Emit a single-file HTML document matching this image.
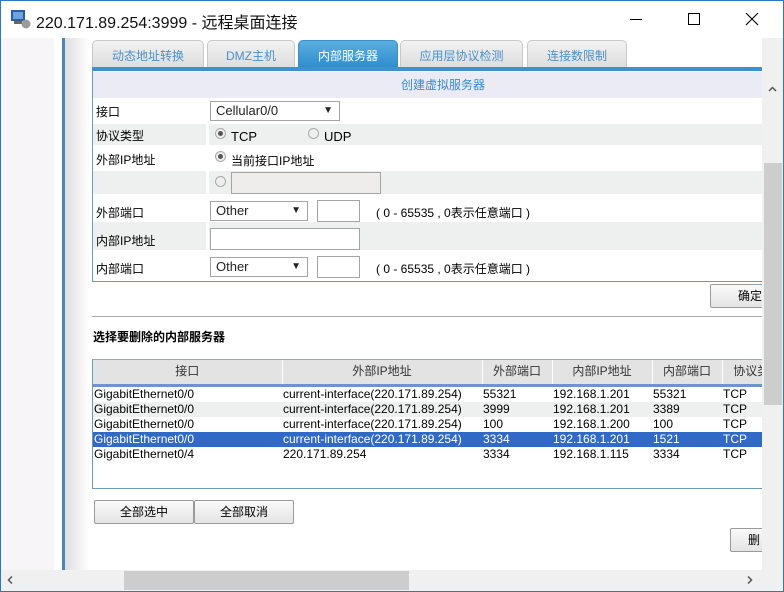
<!DOCTYPE html>
<html><head><meta charset="utf-8"><style>
*{margin:0;padding:0;box-sizing:border-box}
body{width:784px;height:592px;overflow:hidden;background:#fff;font-family:"Liberation Sans","Noto Sans CJK SC",sans-serif;font-size:12px;color:#000;position:relative}
.a{position:absolute}
.win{left:0;top:0;width:784px;height:592px;border:1px solid #2b79c2}
.tab{top:40px;height:29px;border:1px solid #c8c8c8;border-bottom:none;border-radius:5px 5px 0 0;background:linear-gradient(#f2f2f2,#dcdcdc);color:#4a90c8;font-size:12px;text-align:center;line-height:30px}
.tab.on{background:linear-gradient(#5aaee0,#2b8ccc);color:#fff;border-color:#3a90c8}
.row{left:93px;width:669px}
.g{background:#eef0ef}
.lbl{left:96px;font-size:12px}
.sel{height:20px;border:1px solid #a5a5a5;background:#fff;font-size:13px;line-height:18px;padding-left:5px;color:#222}
.sel:after{content:"▼";position:absolute;right:6px;top:0;font-size:10px}
.inp{height:22px;border:1px solid #a5a5a5;background:#fff}
.rad{width:11px;height:11px;border-radius:50%;border:1px solid #aaa;background:#eee}
.rad.c:after{content:"";position:absolute;left:2px;top:2px;width:5px;height:5px;border-radius:50%;background:#555}
.btn{height:24px;border:1px solid #9a9a9a;border-radius:2px;background:linear-gradient(#fafafa,#e4e4e4);text-align:center;line-height:22px;font-size:12px}
table{border-collapse:collapse;font-size:12px}
td{height:15px;line-height:15px;padding:0 1px;white-space:nowrap;overflow:hidden}
.hd td{height:25px;background:#e3e3e3;text-align:center;border-right:1px solid #fff;border-bottom:3px solid #6d94cc;color:#333}
.s td{background:#3169c6;color:#fff}
.z td{background:#eef0ef}
</style></head><body>
<div class="a win"></div>
<svg class="a" style="left:10px;top:9px" width="22" height="20"><rect x="1" y="1" width="14" height="11" fill="#2a5fa8"/><rect x="3" y="3" width="10" height="7" fill="#6fa3e0"/><rect x="4" y="12" width="8" height="3" fill="#666"/><circle cx="16" cy="15" r="4.5" fill="#9a9a9a"/></svg>
<div class="a" style="left:36px;top:9px;font-size:16px;color:#111">220.171.89.254:3999 - 远程桌面连接</div>
<div class="a" style="left:630px;top:19px;width:12px;height:1px;background:#000"></div>
<div class="a" style="left:688px;top:13px;width:12px;height:12px;border:1px solid #000"></div>
<svg class="a" style="left:745px;top:12px" width="14" height="14"><path d="M1 1L13 13M13 1L1 13" stroke="#000" stroke-width="1.1"/></svg>
<div class="a" style="left:1px;top:38px;width:53px;height:532px;background:#f7f5f8"></div>
<div class="a" style="left:62px;top:38px;width:3px;height:532px;background:#4a86b4"></div>
<div class="a" style="left:65px;top:38px;width:24px;height:532px;background:linear-gradient(90deg,#dedede,#fff)"></div>
<div class="a tab" style="left:92px;width:112px">动态地址转换</div>
<div class="a tab" style="left:207px;width:88px">DMZ主机</div>
<div class="a tab on" style="left:298px;width:100px">内部服务器</div>
<div class="a tab" style="left:400px;width:123px">应用层协议检测</div>
<div class="a tab" style="left:527px;width:100px">连接数限制</div>
<div class="a" style="left:92px;top:67px;width:670px;height:4px;background:#3a93d0"></div>
<div class="a" style="left:92px;top:70px;width:672px;height:212px;border:1px solid #6a9ab8;border-top:none"></div>
<div class="a row" style="top:72px;height:26px;background:#ebebf5;color:#3a8ac8;line-height:26px;padding-left:308px">创建虚拟服务器</div>
<div class="a lbl" style="top:103px">接口</div>
<div class="a sel" style="left:210px;top:101px;width:130px">Cellular0/0</div>
<div class="a row g" style="top:124px;height:21px"></div>
<div class="a" style="left:206px;top:124px;width:3px;height:21px;background:#fff"></div>
<div class="a lbl" style="top:127px">协议类型</div>
<div class="a rad c" style="left:215px;top:128px"></div><div class="a" style="left:231px;top:129px;font-size:13px">TCP</div>
<div class="a rad" style="left:308px;top:128px"></div><div class="a" style="left:324px;top:129px;font-size:13px">UDP</div>
<div class="a lbl" style="top:151px">外部IP地址</div>
<div class="a rad c" style="left:215px;top:151px"></div><div class="a" style="left:231px;top:152px">当前接口IP地址</div>
<div class="a row g" style="top:171px;height:23px"></div>
<div class="a" style="left:206px;top:171px;width:3px;height:23px;background:#fff"></div>
<div class="a rad" style="left:215px;top:176px"></div>
<div class="a inp" style="left:231px;top:172px;width:150px;background:#eeedeb"></div>
<div class="a lbl" style="top:204px">外部端口</div>
<div class="a sel" style="left:210px;top:201px;width:98px">Other</div>
<div class="a inp" style="left:317px;top:200px;width:43px"></div>
<div class="a" style="left:376px;top:204px">( 0 - 65535 , 0表示任意端口 )</div>
<div class="a row g" style="top:222px;height:28px"></div>
<div class="a" style="left:206px;top:222px;width:3px;height:28px;background:#fff"></div>
<div class="a lbl" style="top:232px">内部IP地址</div>
<div class="a inp" style="left:210px;top:228px;width:150px"></div>
<div class="a lbl" style="top:260px">内部端口</div>
<div class="a sel" style="left:210px;top:257px;width:98px">Other</div>
<div class="a inp" style="left:317px;top:256px;width:43px"></div>
<div class="a" style="left:376px;top:260px">( 0 - 65535 , 0表示任意端口 )</div>
<div class="a btn" style="left:710px;top:284px;width:60px;text-align:left;padding-left:27px">确定</div>
<div class="a" style="left:92px;top:316px;width:670px;height:1px;background:#aaa"></div>
<div class="a" style="left:93px;top:328px;font-weight:bold;font-size:12px">选择要删除的内部服务器</div>
<div class="a" style="left:92px;top:359px;width:672px;height:130px;border:1px solid #6a9ab8;border-top:1px solid #9aaabb;overflow:hidden">
<table style="width:700px">
<tr class="hd"><td style="width:189px">接口</td><td style="width:200px">外部IP地址</td><td style="width:70px">外部端口</td><td style="width:100px">内部IP地址</td><td style="width:70px">内部端口</td><td>协议类型</td></tr>
<tr><td>GigabitEthernet0/0</td><td>current-interface(220.171.89.254)</td><td>55321</td><td>192.168.1.201</td><td>55321</td><td>TCP</td></tr>
<tr class="z"><td>GigabitEthernet0/0</td><td>current-interface(220.171.89.254)</td><td>3999</td><td>192.168.1.201</td><td>3389</td><td>TCP</td></tr>
<tr><td>GigabitEthernet0/0</td><td>current-interface(220.171.89.254)</td><td>100</td><td>192.168.1.200</td><td>100</td><td>TCP</td></tr>
<tr class="s"><td>GigabitEthernet0/0</td><td>current-interface(220.171.89.254)</td><td>3334</td><td>192.168.1.201</td><td>1521</td><td>TCP</td></tr>
<tr><td>GigabitEthernet0/4</td><td>220.171.89.254</td><td>3334</td><td>192.168.1.115</td><td>3334</td><td>TCP</td></tr>
</table></div>
<div class="a btn" style="left:94px;top:500px;width:100px">全部选中</div>
<div class="a btn" style="left:194px;top:500px;width:100px">全部取消</div>
<div class="a btn" style="left:730px;top:528px;width:40px;text-align:left;padding-left:17px">删</div>
<div class="a" style="left:762px;top:38px;width:21px;height:532px;background:#f0f0f0"></div>
<div class="a" style="left:764px;top:163px;width:18px;height:242px;background:#cdcdcd"></div>
<svg class="a" style="left:762px;top:38px" width="21" height="532"><path d="M7 53L10.5 49.5L14 53M7 555L10.5 558.5L14 555" stroke="#555" stroke-width="1.5" fill="none"/></svg>
<div class="a" style="left:1px;top:570px;width:782px;height:21px;background:#f0f0f0"></div>
<div class="a" style="left:124px;top:571px;width:285px;height:19px;background:#cdcdcd"></div>
<svg class="a" style="left:0;top:570px" width="784" height="21"><path d="M12 77M12 6.5L8.5 10L12 13.5M748 6.5L751.5 10L748 13.5" stroke="#555" stroke-width="1.5" fill="none"/></svg>
</body></html>
